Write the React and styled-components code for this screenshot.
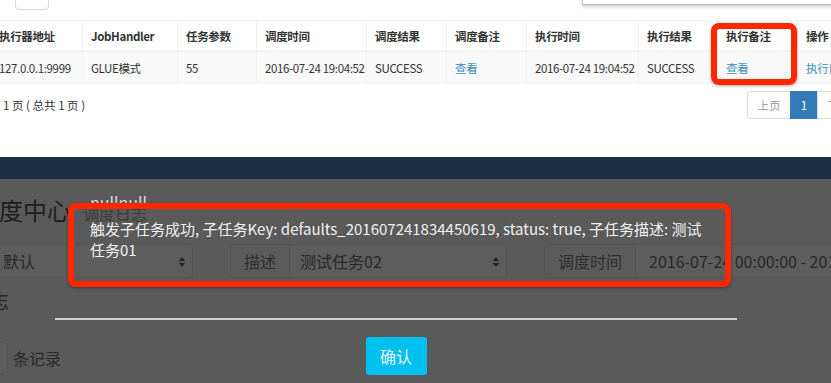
import React from "react";
import styled, { createGlobalStyle } from "styled-components";

const GlobalStyle = createGlobalStyle`
  html, body { margin: 0; padding: 0; background: #fff; }
  body { font-family: "Noto Sans CJK SC", "Noto Sans", sans-serif; }
`;

const Page = styled.div`
  position: relative;
  width: 831px;
  height: 383px;
  overflow: hidden;
  background: #fff;
  font-family: "Noto Sans CJK SC", "Noto Sans", sans-serif;
`;

/* ---------- top (light) screenshot ---------- */
const TopSection = styled.section`
  height: 157px;
  display: flex;
  flex-direction: column;
  background: #fff;
`;

const TopBar = styled.div`
  height: 20px;
  display: flex;
  justify-content: space-between;
  align-items: flex-start;
`;

const ToolButton = styled.div`
  flex-shrink: 0;
  margin-left: 15px;
  margin-top: -18px;
  width: 34px;
  height: 28px;
  box-sizing: border-box;
  border: 1px solid #d9d9d9;
  border-radius: 4px;
  background: #fff;
`;

const Popover = styled.div`
  flex-shrink: 0;
  margin-top: -35px;
  margin-right: -20px;
  width: 269px;
  height: 40px;
  box-sizing: border-box;
  border: 1px solid #c4c4c4;
  background: #fff;
  box-shadow: 0 2px 3px rgba(0, 0, 0, 0.2);
`;

const LogTable = styled.table`
  margin-left: -10px;
  width: 880px;
  border-collapse: collapse;
  table-layout: fixed;
  font-size: 11.5px;
  letter-spacing: -0.35px;
  color: #333;
`;

const HeadCell = styled.th`
  height: 29px;
  padding: 0 8px;
  text-align: left;
  font-weight: 700;
  white-space: nowrap;
  overflow: hidden;
  color: #333;
  border: 1px solid #f2f2f2;
  border-bottom-width: 2px;
`;

const BodyRow = styled.tr`
  background: #f9f9f9;
`;

const BodyCell = styled.td`
  height: 31px;
  padding: 0 8px;
  white-space: nowrap;
  overflow: hidden;
  border: 1px solid #f2f2f2;
  color: ${(p) => (p.$link ? "#3c8dbc" : "#333")};
`;

const PagerRow = styled.div`
  margin-top: 7px;
  height: 28px;
  display: flex;
  align-items: center;
  justify-content: space-between;
`;

const PageInfo = styled.div`
  margin-left: -11px;
  font-size: 11.5px;
  color: #333;
  white-space: pre;
`;

const Pager = styled.div`
  display: flex;
  flex-shrink: 0;
  margin-right: -30px;
`;

const PageBtn = styled.div`
  flex-shrink: 0;
  width: ${(p) => p.$w}px;
  height: 28px;
  box-sizing: border-box;
  margin-left: -1px;
  display: flex;
  align-items: center;
  justify-content: center;
  font-size: 11.5px;
  border: 1px solid ${(p) => (p.$active ? "#337ab7" : "#ddd")};
  background: ${(p) => (p.$active ? "#337ab7" : "#fff")};
  color: ${(p) => (p.$active ? "#fff" : "#999")};
  border-radius: ${(p) => (p.$first ? "3px 0 0 3px" : "0")};
`;

/* ---------- bottom (dimmed) screenshot ---------- */
const NavBand = styled.div`
  height: 22px;
  background: #1b3043;
`;

const Dimmed = styled.section`
  height: 204px;
  display: flex;
  flex-direction: column;
  background: #5a5a5a;
  color: #262626;
`;

const TitleRow = styled.div`
  margin-top: 17px;
  height: 28px;
  display: flex;
  align-items: baseline;
  white-space: nowrap;
`;

const PageTitle = styled.h1`
  flex-shrink: 0;
  margin: 0 0 0 -25px;
  font-size: 24px;
  font-weight: 400;
  line-height: 28px;
  color: #1e1e1e;
`;

const PageSubtitle = styled.small`
  margin-left: 12px;
  font-size: 16px;
  color: #3d3d3d;
`;

const FormRow = styled.div`
  margin-top: 20px;
  height: 34px;
  display: flex;
  white-space: nowrap;
`;

const Field = styled.div`
  position: relative;
  flex-shrink: 0;
  box-sizing: border-box;
  width: ${(p) => p.$w}px;
  margin-left: ${(p) => p.$ml || 0}px;
  height: 34px;
  display: flex;
  align-items: center;
  padding-left: ${(p) => p.$pl ?? 12}px;
  background: #5d5d5d;
  border: 1px solid #535353;
  border-radius: ${(p) => p.$radius || "4px"};
  font-size: 16px;
  color: #282828;
  overflow: hidden;
`;

const Addon = styled.div`
  flex-shrink: 0;
  box-sizing: border-box;
  width: ${(p) => p.$w}px;
  margin-left: ${(p) => p.$ml || 0}px;
  height: 34px;
  display: flex;
  align-items: center;
  justify-content: center;
  background: #5b5b5b;
  border: 1px solid #535353;
  border-right: none;
  border-radius: 4px 0 0 4px;
  font-size: 16px;
  color: #2e2e2e;
`;

const Caret = styled.svg`
  position: absolute;
  right: 6px;
  top: 11px;
  width: 8px;
  height: 12px;
`;

const BoxTitle = styled.h3`
  margin: 12px 0 0 -67px;
  font-size: 19px;
  font-weight: 400;
  line-height: 22px;
  color: #262626;
  white-space: nowrap;
`;

const RecordsRow = styled.div`
  margin-top: 30px;
  height: 32px;
  display: flex;
  align-items: center;
  font-size: 16px;
  color: #2a2a2a;
`;

const LengthSelect = styled.div`
  position: relative;
  flex-shrink: 0;
  margin-left: -50px;
  width: 58px;
  height: 32px;
  box-sizing: border-box;
  background: #5d5d5d;
  border: 1px solid #535353;
  border-radius: 4px;
`;

const RecordsLabel = styled.span`
  margin-left: 5px;
`;

/* ---------- modal layer (over the dimmed page) ---------- */
const ModalLayer = styled.div`
  position: absolute;
  left: 55px;
  top: 188px;
  width: 682px;
  display: flex;
  flex-direction: column;
`;

const ModalTitle = styled.div`
  margin-top: 4px;
  padding-left: 35px;
  font-size: 16px;
  line-height: 20px;
  color: #dcdcdc;
`;

const ModalMessage = styled.div`
  margin-top: 6px;
  padding-left: 35px;
  width: 620px;
  font-size: 15px;
  line-height: 21px;
  color: #f2f2f2;
`;

const ModalDivider = styled.div`
  margin-top: 58px;
  height: 2px;
  background: #cfcfcf;
`;

const ConfirmButton = styled.button`
  align-self: center;
  margin-top: 17px;
  width: 61px;
  height: 38px;
  border: none;
  border-radius: 3px;
  background: #00c0ef;
  color: #e8f8fd;
  font-family: inherit;
  font-size: 16px;
  padding: 0;
`;

/* ---------- red annotations ---------- */
const Highlight = styled.div`
  position: absolute;
  left: ${(p) => p.$x}px;
  top: ${(p) => p.$y}px;
  width: ${(p) => p.$w}px;
  height: ${(p) => p.$h}px;
  box-sizing: border-box;
  border: 6px solid #ff2700;
  border-radius: 8px;
  box-shadow: 0 1px 3px rgba(0, 0, 0, 0.35);
  pointer-events: none;
`;

const colWidths = [92, 95, 79, 110, 80, 80, 112, 79, 80, 73];
const headers = ["执行器地址", "JobHandler", "任务参数", "调度时间", "调度结果", "调度备注", "执行时间", "执行结果", "执行备注", "操作"];
const row = [
  { t: "127.0.0.1:9999" },
  { t: "GLUE模式" },
  { t: "55" },
  { t: "2016-07-24 19:04:52" },
  { t: "SUCCESS" },
  { t: "查看", link: true },
  { t: "2016-07-24 19:04:52" },
  { t: "SUCCESS" },
  { t: "查看", link: true },
  { t: "执行日志", link: true },
];

const SelectCaret = () => (
  <Caret viewBox="0 0 8 12">
    <path d="M4 1 L7.2 5 H0.8 Z M4 11 L7.2 7 H0.8 Z" fill="#262626" />
  </Caret>
);

export default function App() {
  return (
    <>
      <GlobalStyle />
      <Page>
        <TopSection>
          <TopBar>
            <ToolButton />
            <Popover />
          </TopBar>
          <LogTable>
            <colgroup>
              {colWidths.map((w, i) => (
                <col key={i} style={{ width: w }} />
              ))}
            </colgroup>
            <thead>
              <tr>
                {headers.map((h) => (
                  <HeadCell key={h}>{h}</HeadCell>
                ))}
              </tr>
            </thead>
            <tbody>
              <BodyRow>
                {row.map((c, i) => (
                  <BodyCell key={i} $link={c.link}>
                    {c.t}
                  </BodyCell>
                ))}
              </BodyRow>
            </tbody>
          </LogTable>
          <PagerRow>
            <PageInfo>第 1 页 ( 总共 1 页 )</PageInfo>
            <Pager>
              <PageBtn $w={44} $first>上页</PageBtn>
              <PageBtn $w={28} $active>1</PageBtn>
              <PageBtn $w={44}>下页</PageBtn>
            </Pager>
          </PagerRow>
        </TopSection>

        <NavBand />
        <Dimmed>
          <TitleRow>
            <PageTitle>调度中心</PageTitle>
            <PageSubtitle>调度日志</PageSubtitle>
          </TitleRow>
          <FormRow>
            <Field $w={203} $ml={-10}>
              默认
              <SelectCaret />
            </Field>
            <Addon $w={59} $ml={37}>描述</Addon>
            <Field $w={218} $pl={10} $radius="0 4px 4px 0">
              测试任务02
              <SelectCaret />
            </Field>
            <Addon $w={91} $ml={37}>调度时间</Addon>
            <Field $w={320} $pl={13} $radius="0">
              2016-07-24 00:00:00 - 2016-07-24 23:59:59
            </Field>
          </FormRow>
          <BoxTitle>调度日志</BoxTitle>
          <RecordsRow>
            <LengthSelect>
              <SelectCaret />
            </LengthSelect>
            <RecordsLabel>条记录</RecordsLabel>
          </RecordsRow>
        </Dimmed>

        <ModalLayer>
          <ModalTitle>nullnull</ModalTitle>
          <ModalMessage>
            触发子任务成功, 子任务Key: defaults_201607241834450619, status: true, 子任务描述: 测试任务01
          </ModalMessage>
          <ModalDivider />
          <ConfirmButton>确认</ConfirmButton>
        </ModalLayer>

        <Highlight $x={711} $y={23} $w={86} $h={62} />
        <Highlight $x={68} $y={203} $w={663} $h={84} />
      </Page>
    </>
  );
}
